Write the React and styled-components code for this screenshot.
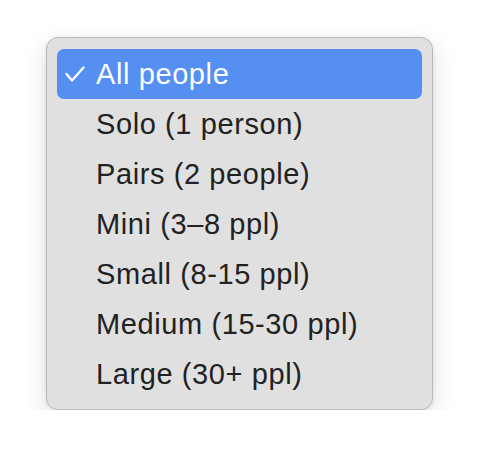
import React from "react";
import styled, { createGlobalStyle } from "styled-components";

const GlobalStyle = createGlobalStyle`
  html, body {
    margin: 0;
    padding: 0;
    background: #ffffff;
  }
  body {
    font-family: "Liberation Sans", Arial, sans-serif;
  }
`;

const Page = styled.div`
  padding: 37px 0 0 46px;
`;

const Menu = styled.ul`
  list-style: none;
  margin: 0;
  box-sizing: border-box;
  width: 387px;
  padding: 11px 10px 10px;
  background: #e0e0e0;
  border: 1px solid #b9b9b9;
  border-radius: 12px;
  box-shadow: 0 8px 26px rgba(0, 0, 0, 0.13), 0 1px 4px rgba(0, 0, 0, 0.08);
`;

const Item = styled.li`
  display: flex;
  align-items: center;
  height: 50px;
  border-radius: 7px;
  font-size: 29px;
  letter-spacing: 0.6px;
  color: ${(p) => (p.selected ? "#ffffff" : "#222222")};
  background: ${(p) => (p.selected ? "#548ff1" : "transparent")};
`;

const Check = styled.span`
  display: flex;
  align-items: center;
  width: 39px;
  box-sizing: border-box;
  padding-left: 8px;
`;

const options = [
  "All people",
  "Solo (1 person)",
  "Pairs (2 people)",
  "Mini (3–8 ppl)",
  "Small (8-15 ppl)",
  "Medium (15-30 ppl)",
  "Large (30+ ppl)",
];

const CheckIcon = () => (
  <svg width="20" height="16" viewBox="0 0 20 16" fill="none">
    <path
      d="M1.5 8 L7 14.5 L18.5 1.5"
      stroke="#ffffff"
      strokeWidth="2.3"
      strokeLinecap="round"
      strokeLinejoin="round"
    />
  </svg>
);

const App = () => {
  const selected = 0;
  return (
    <Page>
      <GlobalStyle />
      <Menu>
        {options.map((label, i) => (
          <Item key={label} selected={i === selected}>
            <Check>{i === selected ? <CheckIcon /> : null}</Check>
            {label}
          </Item>
        ))}
      </Menu>
    </Page>
  );
};

export default App;
